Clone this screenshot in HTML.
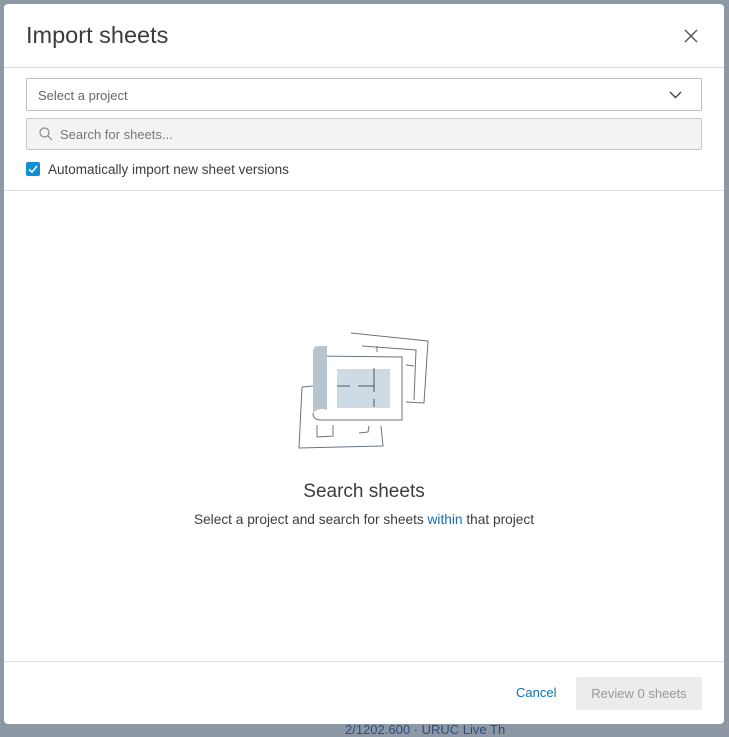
<!DOCTYPE html>
<html><head><meta charset="utf-8"><style>
*{box-sizing:border-box;margin:0;padding:0}
body{width:729px;height:728px;background:#8e98a4;font-family:"Liberation Sans",sans-serif;position:relative;overflow:hidden;color:#3c3c3c}
.m{position:absolute;left:4px;top:4px;width:720px;height:720px;background:#fff;border-radius:4px}
.t{position:absolute;left:22px;top:18px;font-size:23.5px;color:#3c3c3c}
.x{position:absolute;left:680px;top:25px}
.hr{position:absolute;left:0;width:720px;height:1px;background:#ddd}
.sel{position:absolute;left:22px;top:74px;width:676px;height:33px;border:1px solid #bdbdbd;border-radius:2px;font-size:13px;color:#666;padding:9px 0 0 11px}
.srch{position:absolute;left:22px;top:114px;width:676px;height:32px;border:1px solid #c8c8c8;background:#f3f3f3;border-radius:2px;font-size:13px;color:#777;padding:8px 0 0 33px}
.cb{position:absolute;left:22px;top:158px;width:14px;height:14px;background:#0e8ed3;border-radius:2px}
.cbl{position:absolute;left:44px;top:158px;font-size:13.5px;color:#3c3c3c}
.h2{position:absolute;left:0;width:720px;text-align:center;top:477px;font-size:19px;color:#3c3c3c}
.sub{position:absolute;left:0;width:720px;text-align:center;top:508px;font-size:13.7px;color:#3c3c3c}
.cancel{position:absolute;left:512px;top:681px;font-size:13px;color:#0e72b5}
.rev{position:absolute;left:572px;top:673px;width:126px;height:33px;background:#ececec;border-radius:2px;font-size:13px;color:#999;text-align:center;padding-top:9px}
</style></head><body>
<div style="position:absolute;left:345px;top:722px;font-size:13px;color:#2a4f80">2/1202.600 · URUC Live Th</div>
<div class="m">
<div class="t">Import sheets</div>
<svg class="x" width="14" height="14" viewBox="0 0 14 14"><path d="M1 1L13 13M13 1L1 13" stroke="#555" stroke-width="1.4"/></svg>
<div class="hr" style="top:63px"></div>
<div class="sel">Select a project</div>
<svg style="position:absolute;left:665px;top:87px" width="13" height="8" viewBox="0 0 13 8"><path d="M1 1L6.5 6.5L12 1" fill="none" stroke="#444" stroke-width="1.4"/></svg>
<div class="srch">Search for sheets...</div>
<svg style="position:absolute;left:35px;top:123px" width="14" height="14" viewBox="0 0 14 14"><circle cx="5.5" cy="5.5" r="4.5" fill="none" stroke="#888" stroke-width="1.2"/><path d="M9 9L13 13" stroke="#888" stroke-width="1.2"/></svg>
<div class="cb"><svg width="14" height="14" viewBox="0 0 14 14"><path d="M3 7.5L6 10L11 4" fill="none" stroke="#fff" stroke-width="1.6"/></svg></div>
<div class="cbl">Automatically import new sheet versions</div>
<div class="hr" style="top:186px"></div>
<svg style="position:absolute;left:286px;top:321px" width="150" height="130" viewBox="290 325 150 130" fill="none" stroke="#6a7480" stroke-width="1">
<path d="M351 333L428 341L424 403L406 402"/>
<path d="M362 346L416 350L414 400"/>
<path d="M377 346L377 352M406 365L414 366"/>
<path d="M302 387L313 386M302 387L299 448L383 446L381 426"/>
<path d="M317 425L317 437L334 436M359 433L368 432L369 426"/>
<path d="M333 425L333 435"/>
<path d="M313 356L402 357L402 420L321 420Q313 420 313 413"/>
<path d="M313 352Q313 346 319 346L327 346L327 410Q319 407 313 413Z" fill="#b7c5d0" stroke="none"/>
<rect x="337" y="369" width="53" height="39" fill="#cfdbe4" stroke="none"/>
<path d="M337 386L350 386M358 386L374 386M374 368L374 392M374 399L374 407" stroke="#555"/>
</svg>
<div class="h2">Search sheets</div>
<div class="sub">Select a project and search for sheets <span style="color:#0e72b5">within</span> that project</div>
<div class="hr" style="top:657px"></div>
<div class="cancel">Cancel</div>
<div class="rev">Review 0 sheets</div>
</div>
</body></html>
